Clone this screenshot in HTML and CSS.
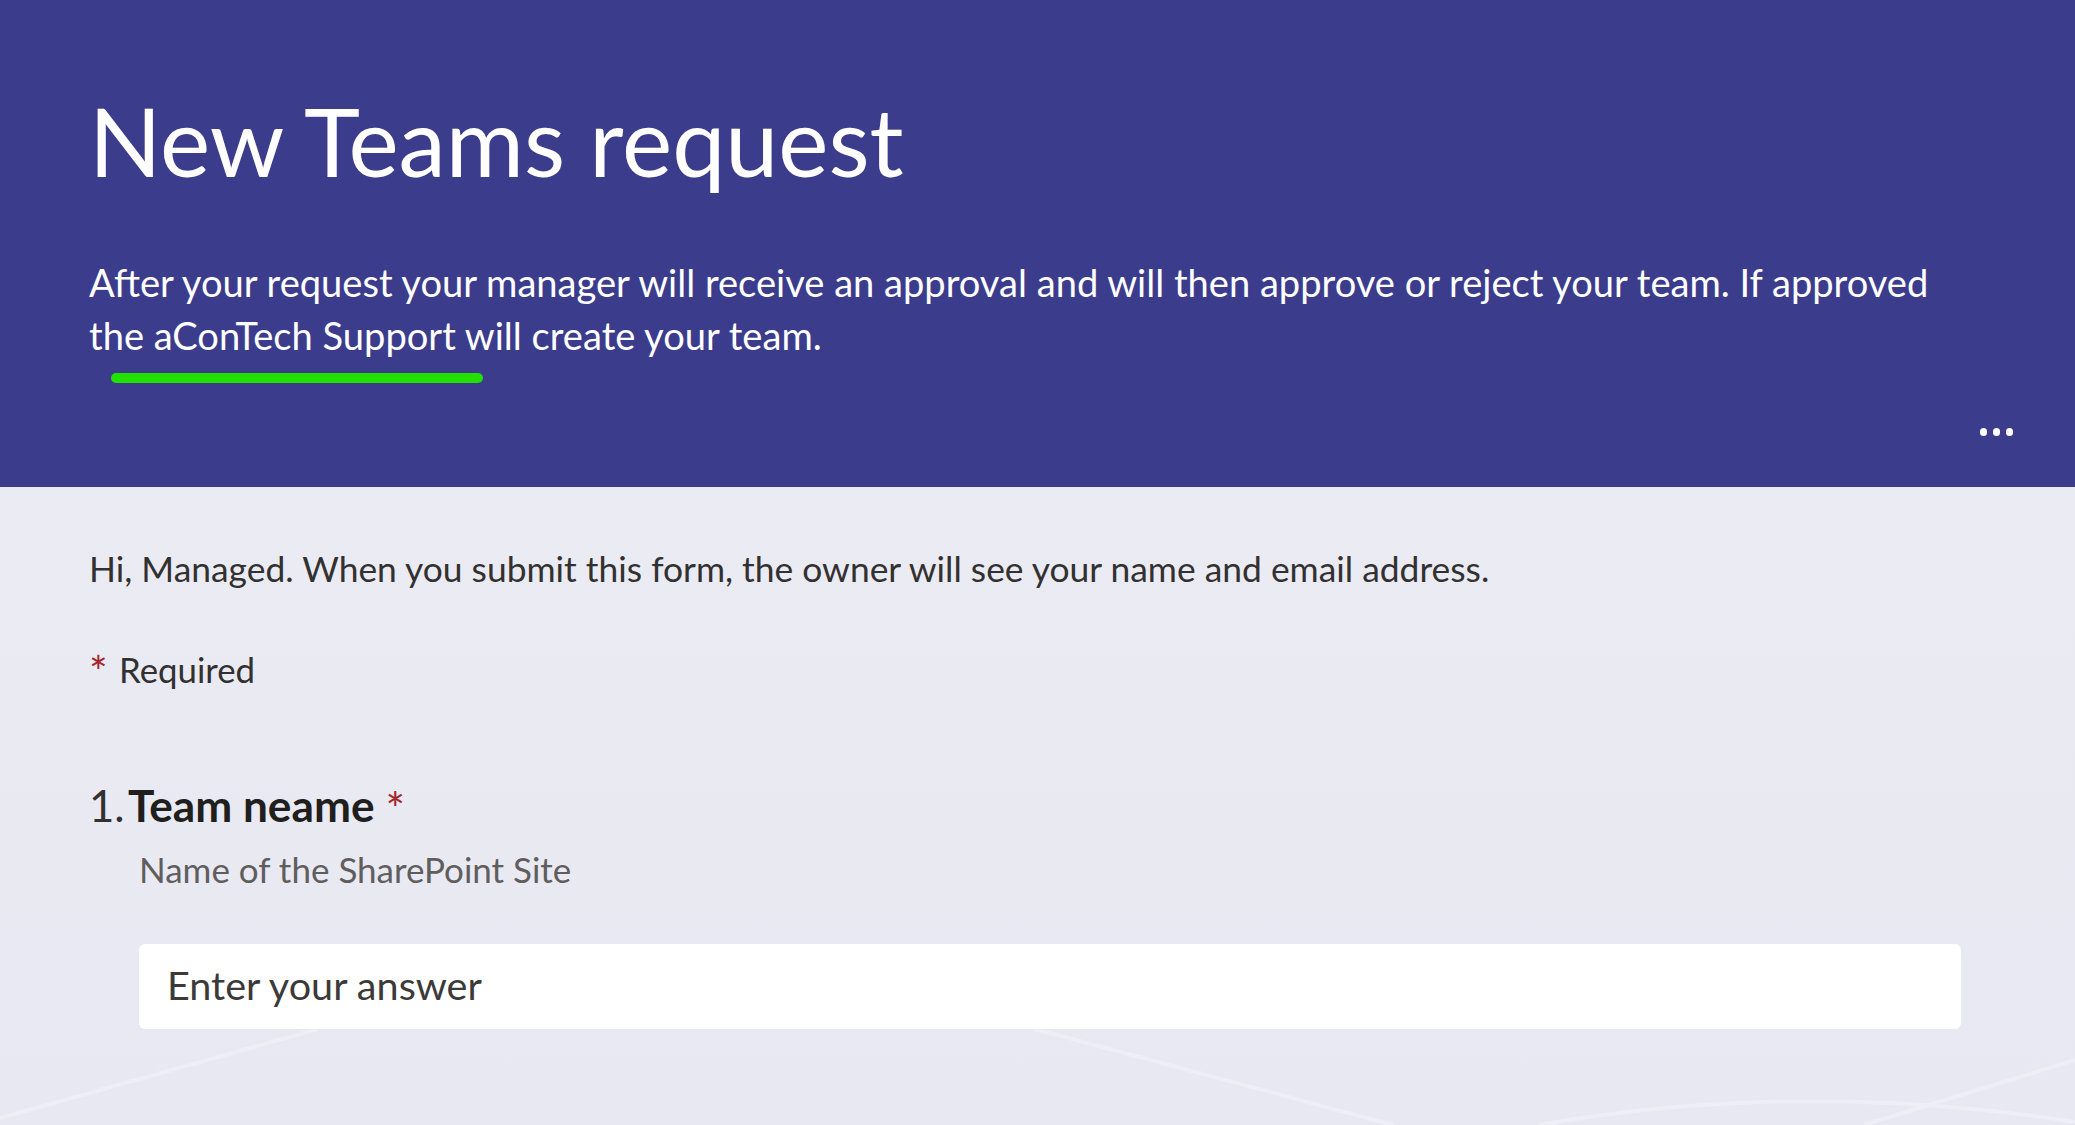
FILE: index.html
```html
<!DOCTYPE html>
<html lang="en">
<head>
<meta charset="utf-8">
<title>New Teams request</title>
<link rel="stylesheet" href="styles.css">
</head>
<body>
<div class="page">
  <header class="form-header">
    <h1 class="form-title">New Teams request</h1>
    <p class="form-desc">After your request your manager will receive an approval and will then approve or reject your team. If approved the aConTech Support will create your team.</p>
    <div class="accent-bar"></div>
    <div class="header-actions">
      <button class="more-btn" aria-label="More options"><span class="dot"></span><span class="dot"></span><span class="dot"></span></button>
    </div>
  </header>
  <main class="form-body">
    <svg class="bg-waves" viewBox="0 0 2075 638" preserveAspectRatio="none" aria-hidden="true">
      <path d="M0 631 L318 542" />
      <path d="M1035 542 L1393 638" />
      <path d="M1539 638 Q1800 592 2075 635" />
      <path d="M1864 638 L2075 573" />
    </svg>
    <p class="notice">Hi, Managed. When you submit this form, the owner will see your name and email address.</p>
    <p class="required-note"><span class="req-star">*</span>Required</p>
    <section class="question">
      <h2 class="q-title"><span class="q-num">1.</span><span class="q-text">Team neame</span><span class="q-star">*</span></h2>
      <p class="q-sub">Name of the SharePoint Site</p>
      <div class="answer-box"><span class="placeholder">Enter your answer</span></div>
    </section>
  </main>
</div>
</body>
</html>
```
FILE: styles.css
```css
html, body {
  margin: 0;
  padding: 0;
}
body {
  font-family: "Lato", "Open Sans", sans-serif;
  background: #ebebf3;
  width: 2075px;
  height: 1125px;
  overflow: hidden;
}
.page {
  display: flex;
  flex-direction: column;
  height: 1125px;
}
.form-header {
  background: #3c3c8d;
  color: #ffffff;
  padding: 84px 62px 0 89px;
  height: 487px;
  box-sizing: border-box;
}
.form-title {
  margin: 0;
  font-weight: 400;
  font-size: 95px;
  line-height: 112px;
  letter-spacing: 0;
}
.form-desc {
  margin: 60px 0 0 0;
  max-width: 1880px;
  font-size: 38.1px;
  line-height: 53px;
  font-weight: 400;
}
.accent-bar {
  margin: 11px 0 0 22px;
  width: 372px;
  height: 10px;
  border-radius: 5px;
  background: #22e100;
}
.header-actions {
  display: flex;
  justify-content: flex-end;
  margin-top: 45px;
}
.more-btn {
  display: flex;
  gap: 5.5px;
  background: none;
  border: 0;
  padding: 0;
  cursor: pointer;
}
.dot {
  width: 7.5px;
  height: 7.5px;
  border-radius: 50%;
  background: #ffffff;
}
.form-body {
  position: relative;
  flex: 1;
  padding: 58px 114px 0 89px;
  background: linear-gradient(#ebebf4, #e8e8f2);
  color: #323130;
}
.bg-waves {
  position: absolute;
  left: 0;
  top: 0;
  width: 2075px;
  height: 638px;
  pointer-events: none;
}
.bg-waves path {
  fill: none;
  stroke: #eeeef6;
  stroke-width: 4;
}
.notice {
  position: relative;
  margin: 0;
  font-size: 35.4px;
  line-height: 48px;
}
.required-note {
  position: relative;
  margin: 53px 0 0 0;
  font-size: 34.8px;
  line-height: 48px;
  display: flex;
  align-items: baseline;
}
.req-star {
  color: #a4262c;
  width: 30px;
  font-size: 44px;
  line-height: 40px;
  position: relative;
  top: 5px;
}
.question {
  position: relative;
  margin-top: 83px;
}
.q-title {
  margin: 0;
  font-size: 43.7px;
  line-height: 56px;
  height: 56px;
  display: flex;
  align-items: baseline;
  color: #201f1e;
}
.q-num {
  font-weight: 400;
  width: 39px;
  color: #323130;
}
.q-text {
  font-weight: 700;
  font-size: 44.2px;
}
.q-star {
  color: #a4262c;
  font-weight: 400;
  font-size: 46px;
  margin-left: 11px;
  position: relative;
  top: 4px;
}
.q-sub {
  margin: 12px 0 0 50px;
  font-size: 35px;
  line-height: 48px;
  color: #605e5c;
}
.answer-box {
  margin: 51px 0 0 50px;
  height: 85px;
  background: #ffffff;
  border-radius: 6px;
  display: flex;
  align-items: center;
  padding-left: 28px;
}
.placeholder {
  font-size: 39.6px;
  color: #3b3a39;
  position: relative;
  top: -2px;
}
```
